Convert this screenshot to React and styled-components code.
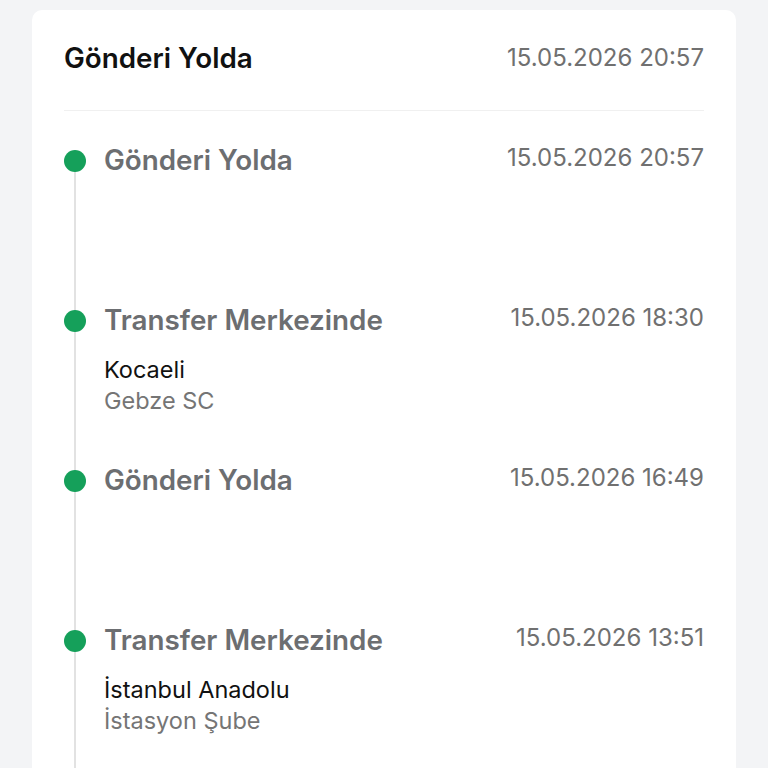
import React from "react";
import styled, { createGlobalStyle } from "styled-components";

const Global = createGlobalStyle`
  html, body { margin: 0; padding: 0; background: #f3f4f6; }
  body { font-family: Inter, "Noto Sans", sans-serif; -webkit-font-smoothing: antialiased; }
`;

const Card = styled.div`
  margin: 10px 32px 0;
  background: #fff;
  border-radius: 10px 10px 0 0;
  padding: 0 32px;
  min-height: 758px;
  box-sizing: border-box;
`;

const Header = styled.div`
  display: flex;
  justify-content: space-between;
  align-items: center;
  padding: 32px 0 36px;
  border-bottom: 1px solid #f0f0f0;
`;

const HeaderTitle = styled.div`
  font-size: 27.8px;
  line-height: 32px;
  font-weight: 600;
  color: #111;
`;

const DateText = styled.div`
  font-size: 24px;
  line-height: 30px;
  font-weight: 400;
  color: #707070;
  white-space: nowrap;
`;

const List = styled.div`
  padding-top: 33px;
`;

const Item = styled.div`
  display: grid;
  grid-template-columns: 22px 1fr auto;
  column-gap: 18px;
  min-height: 160px;
`;

const Rail = styled.div`
  display: flex;
  justify-content: center;
  align-items: flex-start;
  background: linear-gradient(#e2e2e2, #e2e2e2) no-repeat;
  background-size: 2px ${(p) => (p.$first ? "calc(100% - 16px)" : "100%")};
  background-position: center bottom;
`;

const Dot = styled.div`
  width: 22px;
  height: 22px;
  flex: none;
  border-radius: 50%;
  background: #15a05a;
  margin-top: 6px;
`;

const Body = styled.div`
  display: flex;
  flex-direction: column;
`;

const Title = styled.div`
  font-size: 27.8px;
  line-height: 32px;
  font-weight: 600;
  color: #6c6e71;
  margin-bottom: 18px;
`;

const Place = styled.div`
  font-size: 23.5px;
  line-height: 31px;
  color: ${(p) => (p.$muted ? "#757575" : "#111")};
`;

const ItemDate = styled(DateText)`
  line-height: 28px;
`;

const events = [
  { title: "Gönderi Yolda", date: "15.05.2026 20:57" },
  { title: "Transfer Merkezinde", date: "15.05.2026 18:30", city: "Kocaeli", branch: "Gebze SC" },
  { title: "Gönderi Yolda", date: "15.05.2026 16:49" },
  { title: "Transfer Merkezinde", date: "15.05.2026 13:51", city: "İstanbul Anadolu", branch: "İstasyon Şube" },
];

export default function App() {
  return (
    <>
      <Global />
      <Card>
        <Header>
          <HeaderTitle>Gönderi Yolda</HeaderTitle>
          <DateText>15.05.2026 20:57</DateText>
        </Header>
        <List>
          {events.map((e, i) => (
            <Item key={i}>
              <Rail $first={i === 0}>
                <Dot />
              </Rail>
              <Body>
                <Title>{e.title}</Title>
                {e.city && <Place>{e.city}</Place>}
                {e.branch && <Place $muted>{e.branch}</Place>}
              </Body>
              <ItemDate>{e.date}</ItemDate>
            </Item>
          ))}
        </List>
      </Card>
    </>
  );
}
